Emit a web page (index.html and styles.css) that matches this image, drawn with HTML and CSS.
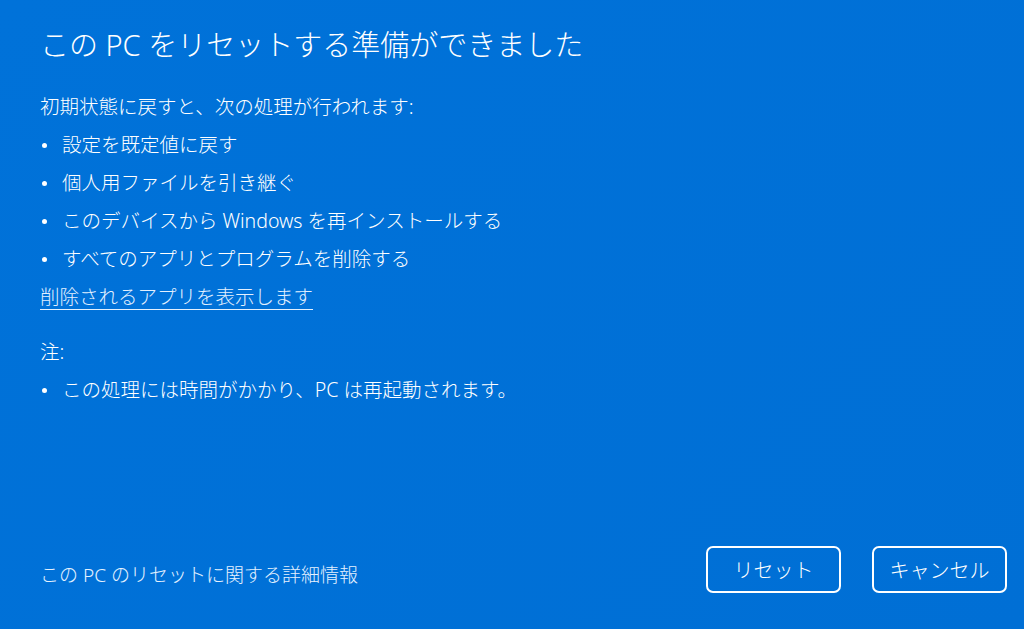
FILE: index.html
```html
<!DOCTYPE html>
<html lang="ja">
<head>
    <meta charset="UTF-8">
    <meta name="viewport" content="width=device-width, initial-scale=1.0">
    <title>この PC をリセットする準備ができました</title>
    <link rel="stylesheet" href="styles.css">
</head>
<body>
    <div class="reset-dialog">
        <div class="dialog-body">
            <h1 class="dialog-title">この PC をリセットする準備ができました</h1>
            <p class="intro">初期状態に戻すと、次の処理が行われます:</p>
            <ul class="steps">
                <li>設定を既定値に戻す</li>
                <li>個人用ファイルを引き継ぐ</li>
                <li>このデバイスから Windows を再インストールする</li>
                <li>すべてのアプリとプログラムを削除する</li>
            </ul>
            <a class="apps-link" href="#">削除されるアプリを表示します</a>

            <p class="note-title">注:</p>
            <ul class="steps">
                <li>この処理には時間がかかり、PC は再起動されます。</li>
            </ul>
        </div>
        <div class="dialog-footer">
            <a class="more-info" href="#">この PC のリセットに関する詳細情報</a>
            <div class="buttons">
                <button class="dialog-btn">リセット</button>
                <button class="dialog-btn">キャンセル</button>
            </div>
        </div>
    </div>
</body>
</html>
```

FILE: styles.css
```css
body {
    font-family: 'Noto Sans', 'Noto Sans CJK JP', sans-serif;
    background-color: #0071d8;
    color: white;
    margin: 0;
    height: 100vh;
}
.reset-dialog {
    display: flex;
    flex-direction: column;
    height: 100%;
    background: linear-gradient(135deg, #0072d9 0%, #006fd5 100%);
}
.dialog-body {
    flex: 1;
    padding: 25px 40px 0 40px;
    font-weight: 300;
}
.dialog-title {
    font-size: 29px;
    font-weight: 300;
    line-height: 40px;
    margin: 0 0 23px 0;
}
.intro,
.note-title {
    font-size: 19.5px;
    line-height: 38px;
    margin: 0;
}
.note-title {
    margin-top: 17px;
}
.steps {
    list-style: none;
    margin: 0;
    padding: 0;
}
.steps li {
    font-size: 19.5px;
    line-height: 38px;
    padding-left: 22px;
    position: relative;
}
.steps li::before {
    content: '';
    position: absolute;
    left: 2px;
    top: 17px;
    width: 5px;
    height: 5px;
    border-radius: 50%;
    background-color: white;
}
.apps-link {
    display: inline-block;
    font-size: 19.5px;
    line-height: 38px;
    color: #e3f0ff;
    text-decoration: underline;
    text-underline-offset: 5px;
}
.dialog-footer {
    display: flex;
    align-items: center;
    justify-content: space-between;
    padding: 0 17px 36px 40px;
    font-weight: 300;
}
.more-info {
    font-size: 19px;
    color: #e4f1ff;
    text-decoration: none;
    margin-top: 9px;
}
.buttons {
    display: flex;
    gap: 31px;
}
.dialog-btn {
    width: 135px;
    height: 47px;
    background-color: transparent;
    border: 2px solid white;
    border-radius: 7px;
    color: white;
    font-family: inherit;
    font-weight: 300;
    font-size: 20px;
    cursor: pointer;
}
```
